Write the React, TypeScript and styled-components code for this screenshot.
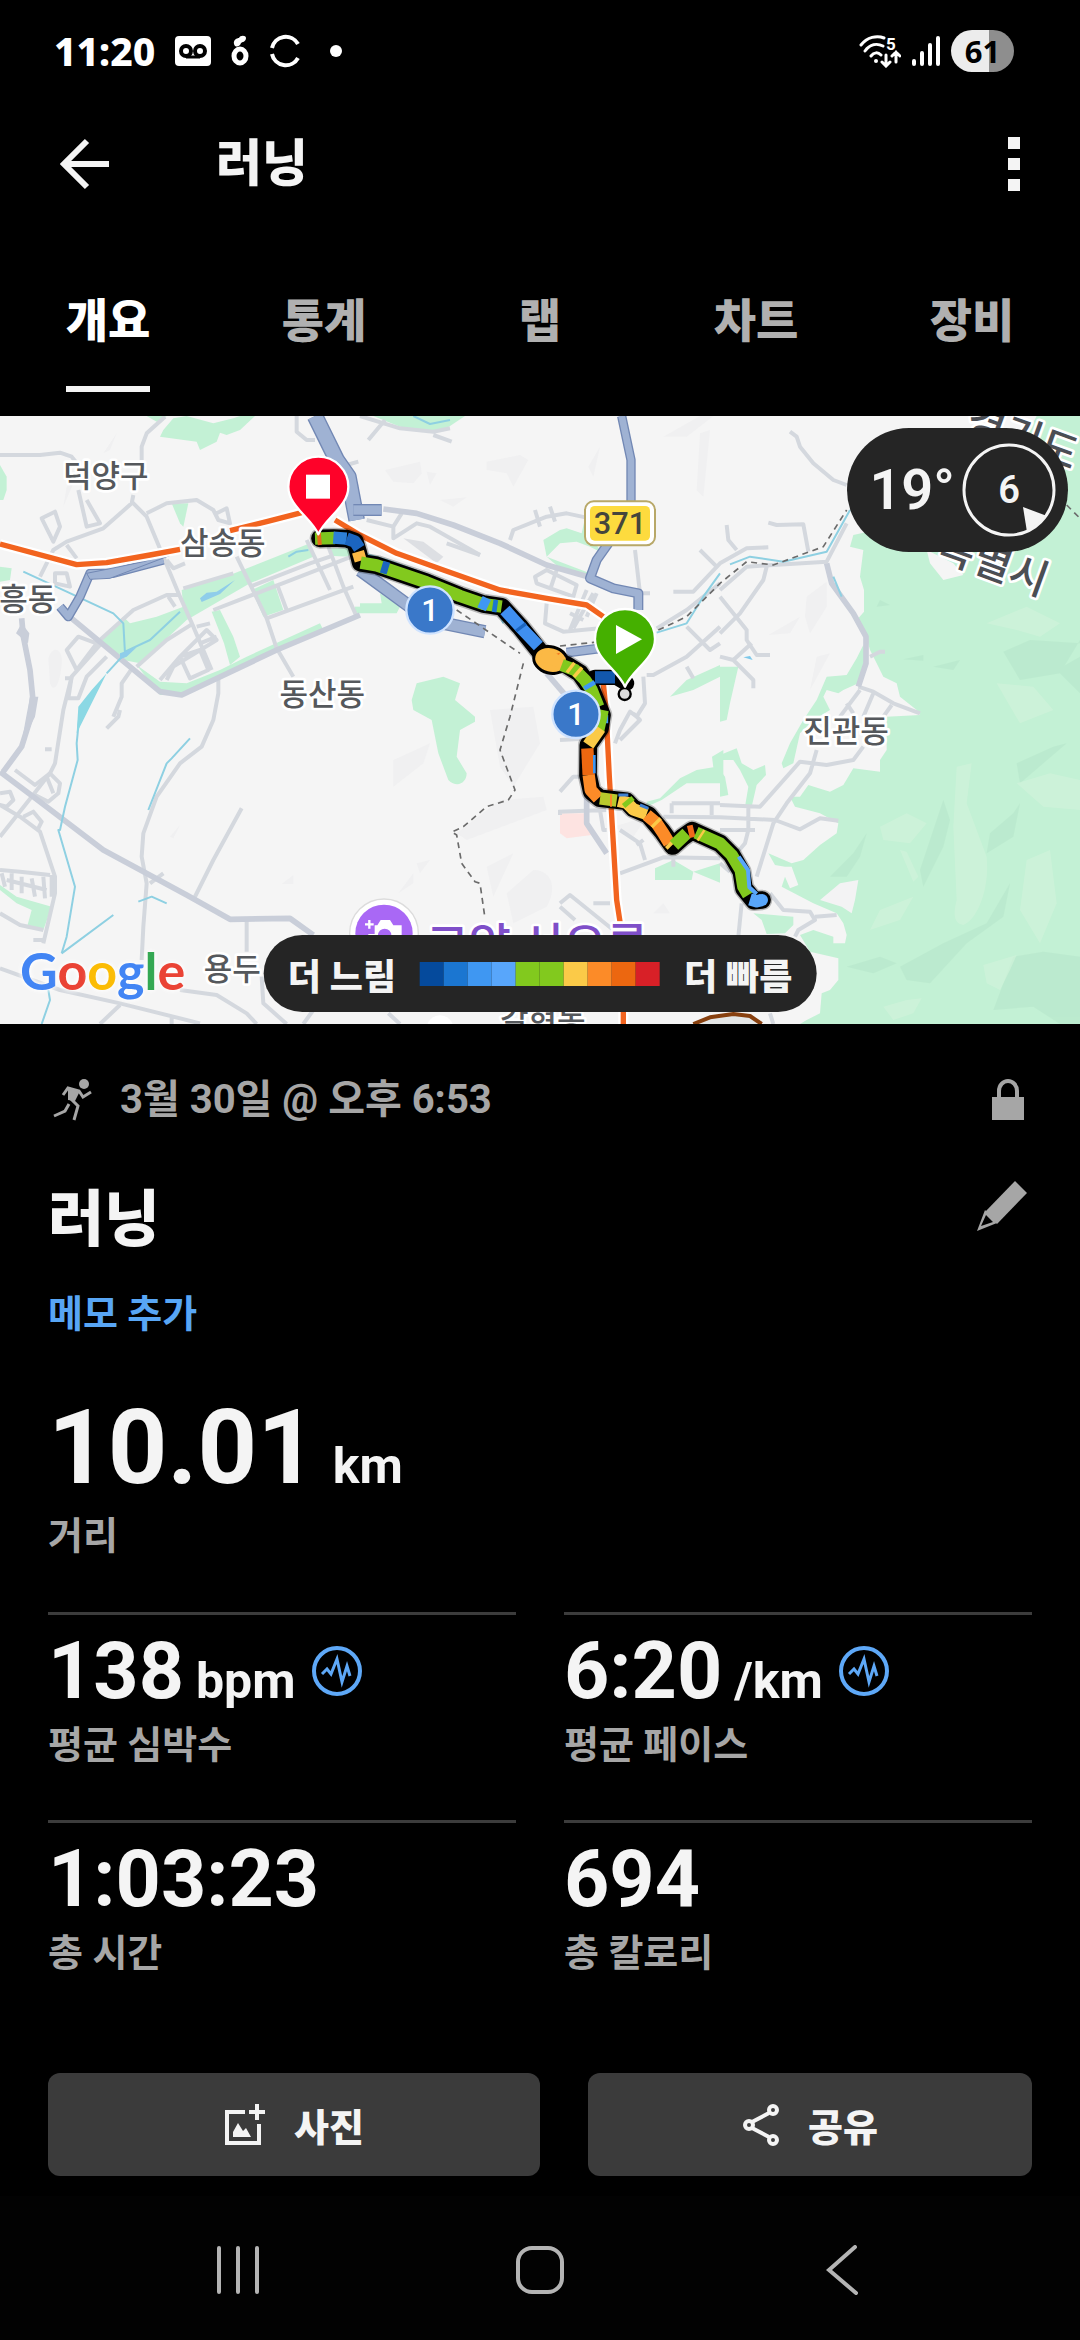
import { useState } from "react";
import styled, { createGlobalStyle } from "styled-components";

const GlobalStyle = createGlobalStyle`
  * {
    box-sizing: border-box;
  }
  body {
    margin: 0;
    background: #000000;
    color: #f4f4f4;
    font-family: Roboto, "Noto Sans CJK KR", sans-serif;
  }
  button {
    border: 0;
    padding: 0;
    background: none;
    color: inherit;
    font-family: inherit;
    cursor: pointer;
  }
  svg {
    display: block;
  }
`;

const Wrapper = styled.div`
  display: flex;
  flex-direction: column;
  min-height: 100vh;
`;

const StatusBar = styled.div`
  display: flex;
  align-items: center;
  justify-content: space-between;
  height: 102px;
  padding: 0 66px 0 54px;
`;

const StatusGroup = styled.div<{ $gap: number }>`
  display: flex;
  align-items: center;
  gap: ${(props) => props.$gap}px;
`;

const Clock = styled.span`
  font-family: "Noto Sans", sans-serif;
  font-size: 39px;
  font-weight: 800;
  line-height: 48px;
  color: #ffffff;
`;

const Battery = styled.span`
  width: 63px;
  height: 42px;
  border-radius: 21px;
  background: linear-gradient(to right, #ececec 61%, #8e8e8e 61%);
  color: #000000;
  font-family: "Noto Sans", sans-serif;
  font-size: 31px;
  font-weight: 700;
  line-height: 42px;
  text-align: center;
`;

const Header = styled.header`
  display: flex;
  align-items: center;
  height: 124px;
  padding: 0 60px;
`;

const HeaderTitle = styled.h1`
  flex: 1;
  margin: 0 0 0 105px;
  font-size: 50px;
  font-weight: 900;
  line-height: 72px;
`;

const TabList = styled.nav`
  display: grid;
  grid-template-columns: repeat(5, 1fr);
  justify-items: center;
  height: 190px;
  padding-top: 58px;
`;

const Tab = styled.button<{ $active: boolean }>`
  height: 108px;
  padding-bottom: 28px;
  border-bottom: 6px solid ${(props) => (props.$active ? "#f4f4f4" : "transparent")};
  color: ${(props) => (props.$active ? "#ffffff" : "#b0b0b0")};
  font-size: 46px;
  font-weight: 900;
  line-height: 72px;
`;

const MapBox = styled.section`
  position: relative;
  overflow: hidden;
  background: #f5f5f5;
`;

const MapSvg = styled.svg`
  width: 100%;
  height: auto;
`;

const Weather = styled.div`
  position: absolute;
  top: 12px;
  right: 12px;
  display: flex;
  align-items: center;
  gap: 7px;
  height: 124px;
  padding: 0 12px 0 22px;
  border-radius: 62px;
  background: #252525;
  font-size: 56px;
  font-weight: 600;
`;

const Wind = styled.div`
  position: relative;
  width: 94px;
  height: 94px;
  font-size: 38px;
  line-height: 94px;
  text-align: center;
  svg {
    position: absolute;
    inset: 0;
  }
`;

const Legend = styled.div`
  position: absolute;
  bottom: 12px;
  left: 50%;
  transform: translateX(-50%);
  display: flex;
  align-items: center;
  gap: 24px;
  height: 77px;
  padding: 0 24px;
  border-radius: 39px;
  background: #252525;
  font-size: 36px;
  font-weight: 900;
  white-space: nowrap;
`;

const Scale = styled.div`
  display: flex;
`;

const Swatch = styled.span<{ $color: string }>`
  width: 24px;
  height: 24px;
  background: ${(props) => props.$color};
`;

const GoogleMark = styled.span`
  position: absolute;
  bottom: 22px;
  left: 20px;
  font-family: Lato, sans-serif;
  font-size: 52px;
  font-weight: 700;
  line-height: 64px;
  text-shadow: 0 0 4px #ffffff, 0 0 6px #ffffff;
`;

const Letter = styled.span<{ $color: string }>`
  color: ${(props) => props.$color};
`;

const Details = styled.main`
  padding: 48px 48px 0;
`;

const MetaRow = styled.div`
  display: flex;
  align-items: center;
  color: #a6a6a6;
  font-size: 40px;
  font-weight: 700;
  line-height: 56px;
  time {
    flex: 1;
    margin-left: 26px;
  }
`;

const TitleRow = styled.div`
  display: flex;
  align-items: flex-start;
  justify-content: space-between;
  margin-top: 52px;
`;

const Title = styled.h2`
  margin: 0;
  font-size: 61px;
  font-weight: 900;
  line-height: 80px;
`;

const MemoLink = styled.a`
  display: block;
  margin-top: 26px;
  color: #58a6f5;
  font-size: 38px;
  font-weight: 700;
  line-height: 56px;
  text-decoration: none;
`;

const Distance = styled.div`
  margin: 50px 0 48px;
`;

const Value = styled.div<{ $big?: boolean }>`
  display: flex;
  align-items: baseline;
  gap: ${(props) => (props.$big ? 16 : 12)}px;
  height: ${(props) => (props.$big ? 112 : 84)}px;
  font-size: ${(props) => (props.$big ? 104 : 79)}px;
  font-weight: 700;
  line-height: ${(props) => (props.$big ? 112 : 84)}px;
  svg {
    align-self: center;
    margin-left: 4px;
  }
`;

const Unit = styled.span`
  font-size: 50px;
  font-weight: 700;
  line-height: 56px;
`;

const Label = styled.div`
  margin-top: 4px;
  color: #a6a6a6;
  font-size: 38px;
  font-weight: 700;
  line-height: 56px;
`;

const Stats = styled.div`
  display: grid;
  grid-template-columns: 1fr 1fr;
  gap: 47px 48px;
`;

const Stat = styled.div`
  padding-top: 14px;
  border-top: 3px solid #3c3c3c;
`;

const Actions = styled.div`
  display: grid;
  grid-template-columns: 41fr 37fr;
  gap: 48px;
  margin-top: auto;
  padding: 24px 48px 20px;
`;

const ActionButton = styled.button`
  display: flex;
  align-items: center;
  justify-content: center;
  gap: 28px;
  height: 103px;
  border-radius: 12px;
  background: #3b3b3b;
  font-size: 38px;
  font-weight: 900;
`;

const SystemNav = styled.nav`
  display: grid;
  grid-template-columns: repeat(3, 1fr);
  align-items: center;
  justify-items: center;
  height: 144px;
  padding: 4px 87px 0;
  background: #020202;
`;

const tabs = ["개요", "통계", "랩", "차트", "장비"];

const paceColors = [
  "#054a9c",
  "#1b76d1",
  "#3f97f2",
  "#58a6fb",
  "#82c91e",
  "#82c91e",
  "#fbca48",
  "#fc8b28",
  "#ec6710",
  "#d82027",
];

const googleLetters = [
  { char: "G", color: "#4285f4" },
  { char: "o", color: "#ea4335" },
  { char: "o", color: "#fbbc05" },
  { char: "g", color: "#4285f4" },
  { char: "l", color: "#34a853" },
  { char: "e", color: "#ea4335" },
];

const stats = [
  { value: "138", unit: "bpm", label: "평균 심박수", chart: true },
  { value: "6:20", unit: "/km", label: "평균 페이스", chart: true },
  { value: "1:03:23", label: "총 시간" },
  { value: "694", label: "총 칼로리" },
];

// map units are a third of a css pixel
const parks = [
  "M3240 18H3110L3040 150 2900 300 2560 375 2550 410 2590 420 2580 500 2592 540V605L2575 625 2595 665 2610 720 2630 760 2650 800 2690 820 2700 860 2750 900 2760 915 2660 920V1020L2640 1050V1085L2560 1075 2530 1125 2490 1145 2425 1125 2400 1160H2370L2385 1190 2460 1210 2515 1240 2510 1270 2460 1305 2410 1350 2375 1360 2305 1330 2325 1365 2355 1370H2375L2395 1425 2370 1435 2355 1400 2345 1430 2440 1480 2510 1510 2530 1540 2540 1575 2535 1600H2500V1580L2440 1560 2400 1575 2430 1625 2515 1645V1710L2490 1740 2465 1750 2460 1810 2420 1830 2400 1842H3240Z",
  "M2260 1510 2380 1520V1545L2355 1570 2300 1572 2285 1530Z",
  "M2590 705 2600 760 2575 820 2530 840 2515 850 2480 840 2470 860 2490 900 2440 930 2400 970 2380 1060 2350 1075 2345 1060 2370 1000 2410 930 2450 870 2480 800 2540 795 2570 745Z",
  "M2160 770H2215L2190 880 2180 930 2160 935Z",
  "M2160 1035 2210 1015 2225 1060 2260 1080 2295 1065 2298 1095 2270 1125 2255 1190H2235L2245 1130 2220 1080 2200 1050H2160Z",
  "M2160 1080 2175 1100 2185 1155 2160 1160Z",
  "M1120 18 1200 50 1290 68 1340 55 1395 18Z",
  "M1630 390 1680 360 1700 355 1745 370 1755 325 1800 425 1770 410 1730 395 1680 400 1640 440Z",
  "M1640 440 1770 490 1760 500 1680 475Z",
  "M1080 580H1145L1140 550 1200 590 1190 610H1080Z",
  "M1235 870 1250 820 1330 800 1380 820 1365 870 1425 920 1425 935 1380 960 1370 1040 1400 1090C1400 1120 1370 1135 1345 1110L1315 1030 1295 930 1240 900Z",
  "M2010 860 2060 810 2160 765V800L2080 840Z",
  "M1940 1175 1980 1165 2040 1105 2090 1080 2140 1072 2136 1040 2170 1020V1120H2060L1985 1170 1940 1190Z",
  "M1965 1375 2020 1350 2080 1385 2160 1360V1418L2080 1385 2075 1410H1965Z",
  "M490 60 520 25 560 18 640 40 700 25 720 18H765L720 60 680 75 660 68 650 95 600 120 590 95 480 80Z",
  "M515 280H565L550 350 540 340Z",
  "M0 165 20 200V240L10 270H0Z",
  "M0 470 35 475 30 510 0 515Z",
  "M300 690 370 620 390 640 470 620 550 590 545 540 690 495 930 400 940 440 750 520 560 630 420 760 370 750Z",
  "M410 765 480 815 560 820 660 780 740 740 960 640 970 660 820 730 540 855H480Z",
  "M755 540 820 510 850 600 790 620Z",
  "M635 605 660 600 700 680 720 740 690 765 672 700Z",
  "M1065 590H1080V610H1065Z",
  "M990 415H1050V440L1000 438Z",
  "M0 1425 50 1460 155 1490 130 1560 80 1555 95 1500 50 1480 0 1440Z",
  "M440 18H500L470 35Z",
];

const parkShades = [
  "M3010 725 3090 690 3240 700V690L3180 790 3060 810Z",
  "M3170 780 3240 740V850Z",
  "M3050 1060 3160 1010 3200 1000 3130 1060 3060 1120Z",
  "M2790 1290 2830 1170 2850 1230 2830 1310 2770 1430 2760 1380Z",
  "M2970 1270 3040 1210 3060 1180 3040 1280 2960 1330Z",
  "M2560 1330 2600 1270 2580 1340 2540 1400 2490 1400Z",
  "M2700 1670 2830 1600 2960 1540 3030 1420 3010 1520 2900 1600 2790 1720 2720 1710Z",
  "M3040 1640 3130 1625 3240 1640V1842H3180L3100 1790 2980 1800Z",
  "M2540 1670 2640 1640 2690 1660 2620 1690Z",
  "M2710 748 2770 735V752Z",
  "M2800 770 2880 750 2860 780Z",
  "M2640 570 2670 585 2630 590Z",
];

const parkLights = [
  "M2870 1070 2915 1060 2900 1180 2960 1340C2970 1440 2930 1530 2890 1545 2860 1540 2860 1510 2870 1470L2860 1250Z",
  "M2700 1320 2720 1325 2755 1400 2740 1415Z",
  "M2640 1250 2720 1210 2780 1240 2730 1300 2650 1290Z",
  "M3030 1680 3000 1740 2960 1720 2950 1665 3050 1635Z",
  "M2650 1790 2720 1770 2765 1765 2740 1810 2680 1830Z",
  "M2960 640 3080 590 3180 640 3120 680 3050 660Z",
  "M2640 1500 2740 1460 2700 1530 2610 1560Z",
  "M3080 1350 3150 1320 3170 1480 3120 1600 3060 1500Z",
  "M2990 820 3100 830 3160 900 3060 940Z",
  "M3050 1120 3150 1090 3240 1110V1200L3130 1190Z",
];

const hills = [
  "M1155 180 1260 155 1265 190 1240 220 1180 215Z",
  "M1460 155 1560 135 1585 150 1540 230 1520 190 1460 180Z",
  "M1280 185 1310 190 1290 225Z",
  "M1320 270 1400 262 1360 290Z",
  "M1765 170 1800 110 1780 200Z",
  "M1990 80 2100 18H2140L2060 80Z",
  "M2100 70 2130 60 2110 260 2090 240Z",
  "M2420 560 2480 515V590L2430 670 2415 620Z",
  "M2305 675 2400 620 2370 670Z",
  "M2450 740 2490 730 2430 840Z",
  "M145 745C160 700 190 720 185 760 180 830 160 850 150 820Z",
  "M1180 1050 1290 1000 1270 1060 1180 1130Z",
  "M1470 900 1600 890 1620 1000 1540 1130 1500 1070Z",
  "M1370 1270 1500 1170 1630 1160 1640 1200 1400 1290Z",
  "M1520 1450 1600 1380C1660 1380 1670 1440 1640 1490L1540 1540Z",
  "M1460 1370 1540 1330 1480 1460Z",
  "M1195 1450 1240 1390V1420Z",
  "M1250 1360 1290 1350 1260 1390Z",
  "M1840 1250 1940 1220 1900 1280Z",
  "M1960 1510 1990 1480 2010 1510Z",
  "M510 1280 540 1245 520 1285Z",
  "M845 1422 880 1395V1422Z",
  "M200 230 220 220 190 290Z",
  "M310 130 350 70 330 120Z",
];

const thinRoads = [
  "M0 135H120L180 128 215 140 235 165M495 20 440 70 425 110V150",
  "M235 240 260 350 300 340 260 270M400 255 395 280 310 355 200 395 160 420 120 500",
  "M395 275 440 320 540 560 580 650 635 780M440 310 500 280 590 270 640 300 655 330 690 340 680 295 650 310",
  "M125 325 165 305 180 350 160 395ZM200 405 230 445M165 490 200 490 210 530 165 520Z",
  "M500 450 520 475 555 460M710 440 800 625 830 715 880 800M550 535 700 490M300 690 400 600 500 555H540M505 560 525 590",
  "M580 640 500 690 410 770M750 530 930 460 990 440M640 600 1080 430M830 520 860 600M800 625 1060 530M920 390 990 540M985 410 1030 530 1070 620",
  "M200 720 235 680 290 700 230 780ZM320 740 260 800 235 865 205 865 215 800 300 705M195 805H210",
  "M480 810 540 740 620 660 650 690 520 770 500 810M540 740 600 720 625 780 570 805ZM590 650 630 640M600 700 650 680",
  "M215 800 190 900 165 1060 150 1090 95 1160 0 1280M400 770 365 820V860L340 920 M655 800V850L640 930 605 1010 540 1060 470 1160 430 1270 425 1340 440 1420 430 1550 425 1650",
  "M45 1080 105 1125 150 1090 180 1120 175 1150 145 1175 105 1155M140 1100 160 1150M0 1150 30 1145 40 1170 20 1190 0 1185 60 1220 120 1265 165 1400V1450L130 1600M70 1220 100 1205 125 1235 115 1255",
  "M0 1380 60 1385 150 1395M5 1390 15 1430M35 1390V1440M65 1400V1450M95 1405 105 1460M130 1400 135 1465M155 1395V1460M20 1410 140 1440M0 1510 60 1545 130 1560M100 1590H135",
  "M725 1195 640 1350 580 1470M490 1390 450 1420M135 1018H155M360 900 355 920 320 955",
  "M0 1675 180 1740 360 1780 600 1840M360 1785 300 1842M515 1820V1842M540 1740 650 1755 740 1810 770 1842M740 1530V1625M785 1700 790 1780 860 1842M940 1800 910 1842",
  "M890 18V65L920 90 945 90M1040 165 1075 155M1055 230H1075",
  "M1155 30 1105 90M1080 18 1200 55 1300 65 1350 55M1300 75 1355 95M1100 330 1180 350 1205 310M1180 350V385L1250 340 1290 350 1440 435",
  "M1400 360V365M1440 435 1340 400M1530 390 1540 360 1640 320 1700 310 1770 325M1605 300 1620 350M1650 290 1665 335",
  "M1605 500 1640 480 1730 525 1720 560 1610 520ZM1670 480 1650 540M1780 550 1720 655M1760 540 1710 660M1640 580 1635 640 1690 665 1800 655M1710 610 1750 630M1790 550 1760 620",
  "M1905 420 1920 550M1920 550H1950M2100 420 2150 470M2160 520 2060 600 1970 655M2020 545H2080L2160 460 2240 415 2305 412M2180 345 2185 390 2210 420",
  "M2060 650 2130 720 2160 700M1940 795H1960L2060 740 2160 650M2060 770 2080 805M1930 800 1935 880 1910 920 1890 905 1860 960 1845 1000M1900 910 1920 930 1860 990",
  "M2370 65 2390 80 2400 110 2440 160 2500 210 2540 225M2305 338 2330 345 2410 343 2425 425M2160 560 2240 660V690L2270 735H2310M2160 740 2200 750 2255 700M2200 750 2260 810V835M2160 670 2220 610 2290 510 2300 470",
  "M2160 540 2240 470 2320 465 2480 455 2540 340M2610 740 2640 725H2655M2575 830 2620 845 2680 880 2760 910M2620 850 2590 920M2580 840 2520 920M2540 880 2560 910M2675 885 2650 920",
  "M1680 1145 1720 1100H1745M1680 990 1780 985M1675 1205 1820 1200M1680 1200V1215M1800 1200 1810 1260H1820M1860 1260 1920 1300 1935 1350M1910 1305 1930 1290M1860 1390 1990 1342 2160 1345M1780 1480H1830M2020 1345V1370",
  "M1680 1480 1710 1455 1840 1560M1680 1490 1725 1530M1165 1810 1200 1842",
  "M2015 1180V1210M2015 1180H2160M2135 1180V1215M1990 1220 2160 1222 2325 1230 2400 1258 2460 1225 2515 1232M2160 1185 2280 1190 2400 1055 2480 1065 2560 1050 2590 1010M2450 1020 2430 1090 2360 1180 2320 1240 2270 1400M2160 1260H2265M2245 1190V1260L2235 1300 2210 1330",
  "M2310 1450 2350 1500 2430 1505 2445 1530 2395 1560 2385 1580M2445 1520 2510 1515M2225 1480 2215 1580M2160 1360 2190 1385M2310 1810 2320 1842",
];

const mainRoads = [
  "M1150 297 1250 310 1360 345 1500 400 1640 465 1780 505",
  "M65 625 70 680 90 780 98 860 90 930 65 1010 10 1085",
  "M0 1085 100 1160 310 1320 560 1455 690 1528 870 1525 940 1575",
  "M215 625 480 845 545 855 830 720 1080 615",
  "M2480 460 2495 520 2560 610 2598 680V760L2575 830",
  "M1760 1140V1240L1820 1330",
  "M1640 790 1700 860",
];

const highways = [
  { d: "M945 18 1010 150 1045 200 1070 330", width: 44 },
  { d: "M1060 300H1145", width: 30 },
  { d: "M1865 18 1893 150V300", width: 22 },
  { d: "M1825 400 1790 450 1770 505 1840 535 1915 550V600", width: 24 },
  { d: "M1080 480 1230 590 1330 640 1455 665", width: 34 },
  { d: "M1700 728 1800 715", width: 24 },
  { d: "M490 450 340 490 270 490 240 560 205 620 180 590", width: 22 },
];

const railways = ["M1370 600 1560 730", "M1680 708 1800 695", "M1975 660 2060 620 2160 520 2240 455 2320 465 2470 410 2540 300", "M3200 285 3240 325"];

const borders = ["M1570 760 1530 920 1500 1020 1545 1140 1525 1170 1460 1190 1390 1250 1355 1266 1370 1275 1385 1360 1425 1415 1440 1420 1455 1525"];

const streams = [
  "M70 485 200 545 340 610 370 640 375 730 320 790",
  "M375 725 450 690 540 605",
  "M865 440 890 425 925 420",
  "M240 900 230 1000 233 1050 195 1190 180 1260 175 1260 225 1430 200 1580 185 1630",
  "M185 1630 340 1515M570 985 515 1045 500 1060 445 1200M415 1475 455 1460 500 1480",
  "M145 1740 150 1770 125 1842",
  "M1090 430 1160 450 1300 500 1380 545 1430 550 1490 595 1510 640",
  "M1970 668 2060 640 2110 560 2160 490M2190 463 2250 440 2350 455 2480 425 2550 300M2500 500 2525 560",
  "M1240 18 1290 42 1350 30",
];

const railRed = [
  "M0 402 230 464 320 458 450 435 540 418",
  "M690 362 800 335 905 308M1005 330 1080 375 1190 430 1330 480 1500 540 1640 565 1760 585 1810 620",
  "M1810 820 1818 900 1828 1100 1840 1300 1850 1470 1870 1600 1870 1842",
];

const routeSpans = [
  { color: "#7cc41f", d: "M945 386 1005 384" },
  { color: "#e56a1b", d: "M952 387 964 386" },
  { color: "#2d7fd8", d: "M1000 383 1040 386" },
  { color: "#1b65c0", d: "M1040 386 1065 395 1078 415" },
  { color: "#fbb945", d: "M1074 425 1082 452" },
  { color: "#82c91e", d: "M1082 458 1130 466 1280 517 1380 558 1450 582 1505 590" },
  { color: "#1b65c0", d: "M1145 470 1165 476" },
  { color: "#3f97f2", d: "M1440 575 1465 587" },
  { color: "#1b76d1", d: "M1478 587 1492 589" },
  { color: "#3f8ff0", d: "M1515 600 1560 650 1615 708" },
  { color: "#1b65c0", d: "M1560 648 1566 656" },
  { color: "#fbb945", d: "M1625 735 1655 745 1690 760" },
  { color: "#82c91e", d: "M1685 765 1725 780 1755 810 1775 840 1795 890" },
  { color: "#fbca48", d: "M1708 770 1716 776M1730 783 1738 790" },
  { color: "#3f97f2", d: "M1765 820 1772 832M1806 915 1806 940" },
  { color: "#1257ad", d: "M1785 802 1845 802" },
  { color: "#82c91e", d: "M1808 900 1795 960" },
  { color: "#fbca48", d: "M1800 955 1765 1005" },
  { color: "#ec6710", d: "M1762 1015 1766 1095" },
  { color: "#fc8b28", d: "M1766 1095 1772 1140 1795 1165" },
  { color: "#b9c92c", d: "M1800 1165 1850 1172" },
  { color: "#fc8b28", d: "M1830 1172 1836 1172" },
  { color: "#fbca48", d: "M1855 1172 1880 1178 1900 1198 1940 1212" },
  { color: "#82c91e", d: "M1880 1170 1890 1182" },
  { color: "#fc8b28", d: "M1940 1215 1970 1240 1990 1270 2008 1300" },
  { color: "#fbca48", d: "M1965 1235 1972 1242M2008 1298 2016 1306" },
  { color: "#82c91e", d: "M2022 1306 2060 1270" },
  { color: "#f26a1b", d: "M2065 1266 2082 1262" },
  { color: "#82c91e", d: "M2088 1268 2160 1300 2195 1335 2222 1380 2230 1430 2245 1455" },
  { color: "#fbca48", d: "M2100 1274 2106 1278" },
  { color: "#58a6fb", d: "M2250 1468 2270 1474 2286 1470" },
];

const routeLine =
  "M960 385 1000 384 1040 386 1065 395 1074 425 1082 458 1130 466 1280 517 1380 558 1450 582 1505 590 1560 650 1620 725 1655 745 1700 765 1740 790 1775 840 1806 915 1800 955 1765 1005 1764 1095 1775 1145 1800 1165 1880 1174 1900 1195 1945 1215 1985 1262 2018 1308 2050 1280 2076 1262 2160 1300 2195 1335 2224 1385 2232 1435 2262 1472 2286 1470";

const places = [
  { name: "덕양구", x: 317, y: 232 },
  { name: "삼송동", x: 668, y: 432 },
  { name: "흥동", x: 83, y: 600 },
  { name: "동산동", x: 967, y: 886 },
  { name: "진관동", x: 2538, y: 996 },
  { name: "용두", x: 697, y: 1710 },
  { name: "갈현동", x: 1628, y: 1862 },
];

const PlaceText = styled.text<{ $color?: string; $size?: number; $anchor?: string }>`
  fill: ${(props) => props.$color || "#55585c"};
  stroke: #ffffff;
  stroke-width: 16px;
  stroke-linejoin: round;
  paint-order: stroke;
  font-family: "Noto Sans CJK KR", sans-serif;
  font-size: ${(props) => props.$size || 93}px;
  font-weight: 500;
  text-anchor: ${(props) => props.$anchor || "middle"};
`;

const ShieldText = styled.text<{ $color: string }>`
  fill: ${(props) => props.$color};
  font-size: 92px;
  font-weight: 500;
  text-anchor: middle;
`;

function Pin({ x, y, color }: { x: number; y: number; color: string }) {
  return (
    <path
      transform={`translate(${x} ${y})`}
      d="M0 143C-22 92-90 60-90 0A90 90 0 0 1 90 0C90 60 22 92 0 143Z"
      fill={color}
      stroke="#fff"
      strokeWidth="7"
    />
  );
}

function Map() {
  return (
    <MapSvg viewBox="0 18 3240 1824" fill="none" strokeLinejoin="round" strokeLinecap="butt" role="img" aria-label="지도">
      <g fill="#f0f0f1">
        {hills.map((d) => (
          <path key={d} d={d} />
        ))}
      </g>
      <path d="M1680 1210H1755L1775 1275 1700 1285 1680 1270Z" fill="#fde3e1" />
      <g fill="#c3f1d5">
        {parks.map((d) => (
          <path key={d} d={d} />
        ))}
      </g>
      <g fill="#b5e5ca" opacity="0.5">
        {parkShades.map((d) => (
          <path key={d} d={d} />
        ))}
      </g>
      <g fill="#d3f4dc" opacity="0.6">
        {parkLights.map((d) => (
          <path key={d} d={d} />
        ))}
      </g>
      <path d="M2460 1470 2520 1420 2575 1410 2565 1470 2555 1510 2525 1490Z" fill="#f3f3f4" />
      <path d="M2780 420 2860 460 2890 495 2830 510 2790 460Z" fill="#f5f5f5" />
      <g stroke="#d4d8de" strokeWidth="12">
        {thinRoads.map((d) => (
          <path key={d} d={d} />
        ))}
      </g>
      <g stroke="#c9ced9" strokeWidth="17">
        {mainRoads.map((d) => (
          <path key={d} d={d} />
        ))}
      </g>
      <path d="M48 670 65 640 88 670 84 700Z M90 860 115 860 105 920 65 1000 75 940Z" fill="#c9ced9" />
      <path d="M1210 385 1270 395 1330 440 1310 460Z" fill="#dddfe3" />
      <g stroke="#8ed0e2" strokeWidth="6">
        {streams.map((d) => (
          <path key={d} d={d} />
        ))}
      </g>
      <path d="M320 790 290 850 250 930 230 970 235 890 275 840Z" fill="#8bd8e4" />
      <path d="M600 565 620 548 650 545 705 510 660 552 605 576Z" fill="#8fcdea" />
      <path d="M360 730 410 712 380 740 360 748Z" fill="#8fcdea" />
      <path d="M2230 742 2250 738 2258 750Z" fill="#7dc8ea" />
      {highways.map((road) => (
        <g key={road.d}>
          <path d={road.d} stroke="#7288b4" strokeWidth={road.width + 6} />
          <path d={road.d} stroke="#9fb2d3" strokeWidth={road.width - 2} />
        </g>
      ))}
      <path d="M260 490 330 476 430 455 540 425 330 505 270 508Z" fill="#9fb2d3" stroke="#7288b4" strokeWidth="3" />
      <g stroke="#6b6b6b" strokeWidth="5" strokeDasharray="18 14">
        {railways.map((d) => (
          <path key={d} d={d} />
        ))}
        {borders.map((d) => (
          <path key={d} d={d} />
        ))}
      </g>
      {railRed.map((d) => (
        <g key={d}>
          <path d={d} stroke="#fff" strokeWidth="30" />
          <path d={d} stroke="#f2641f" strokeWidth="16" />
        </g>
      ))}
      <path d="M2080 1842 2130 1822 2200 1812 2250 1818 2285 1842" stroke="#87400f" strokeWidth="12" fill="#e4e6e6" />

      <path d={routeLine} stroke="#000" opacity="0.25" strokeWidth="62" strokeLinecap="round" />
      <path d="M1765 812 1785 802 1850 802 1880 820" stroke="#000" strokeWidth="46" strokeLinecap="round" />
      <path d={routeLine} stroke="#000" strokeWidth="53" strokeLinecap="round" />
      <g transform="rotate(14 1652 750)">
        <ellipse cx="1652" cy="750" rx="56" ry="44" fill="#000" />
        <ellipse cx="1652" cy="750" rx="47" ry="35" fill="#fbb945" />
      </g>
      <path d="M1640 740 1680 728 1670 748Z" fill="#f26a1b" />
      {routeSpans.map((span) => (
        <path key={span.d} d={span.d} stroke={span.color} strokeWidth="37" />
      ))}
      <path d="M2216 1340 2244 1380 2248 1432 2270 1452" stroke="#58a6fb" strokeWidth="12" />
      <circle cx="2286" cy="1470" r="18" fill="#58a6fb" />
      <path d="M1783 1035 1783 1090" stroke="#3f97f2" strokeWidth="8" />
      <path d="M1855 1155H1885M1920 1185 1945 1195" stroke="#3f7fd0" strokeWidth="9" />

      <g>
        <rect x="1755" y="274" width="210" height="132" rx="26" fill="#fff" stroke="#b8a868" strokeWidth="6" />
        <rect x="1770" y="288" width="180" height="104" rx="14" fill="#fddb3e" />
        <ShieldText x={1860} y={371} $color="#45453c">
          371
        </ShieldText>
      </g>
      {[
        { x: 1290, y: 600 },
        { x: 1728, y: 913 },
      ].map((shield) => (
        <g key={shield.x}>
          <circle cx={shield.x} cy={shield.y} r="71" fill="#3a78c9" stroke="#cfe3ff" strokeWidth="7" />
          <ShieldText x={shield.x} y={shield.y + 32} $color="#ffffff">
            1
          </ShieldText>
        </g>
      ))}

      {places.map((place) => (
        <PlaceText key={place.name} x={place.x} y={place.y}>
          {place.name}
        </PlaceText>
      ))}
      <PlaceText $color="#4b4e54" $size={125} $anchor="end" transform="translate(3215 180) rotate(20)">
        경기도
      </PlaceText>
      <PlaceText $color="#4b4e54" $size={125} $anchor="end" transform="translate(3125 558) rotate(20)">
        특별시
      </PlaceText>
      <PlaceText $color="#7f4fc9" $size={138} x={1612} y={1654}>
        고양 서오릉
      </PlaceText>

      <circle cx="1152" cy="1570" r="103" fill="#fff" stroke="#dcdcdc" strokeWidth="4" />
      <circle cx="1152" cy="1570" r="86" fill="#a968f5" />
      <path
        d="M1124 1546H1132L1142 1530H1170L1180 1546H1205V1610H1105V1572H1124Z"
        fill="#fff"
      />
      <circle cx="1154" cy="1576" r="20" fill="#a968f5" />
      <path d="M1108 1530V1556M1095 1543H1121" stroke="#fff" strokeWidth="7" />
      <circle cx="1320" cy="1856" r="40" fill="#fff" />

      <circle cx="1874" cy="852" r="18" fill="#ddd" stroke="#000" strokeWidth="7" />
      <Pin x={955} y={230} color="#fe0229" />
      <rect x="918" y="194" width="72" height="72" fill="#fff" />
      <Pin x={1875} y={687} color="#45b000" />
      <path d="M1848 645V732L1926 688Z" fill="#fff" />
    </MapSvg>
  );
}

function ChartBadge() {
  return (
    <svg width="50" height="50" viewBox="0 0 50 50" fill="none" stroke="#5ea8f7" aria-hidden="true">
      <circle cx="25" cy="25" r="23" strokeWidth="4" />
      <path d="M10 28 15 23 19 28 25 13 30 36 35 20 38 30" strokeWidth="3" />
    </svg>
  );
}

function App() {
  const [activeTab, setActiveTab] = useState(tabs[0]);

  return (
    <Wrapper>
      <GlobalStyle />
      <StatusBar>
        <StatusGroup $gap={20}>
          <Clock>11:20</Clock>
          <svg width="36" height="30" viewBox="0 0 36 30" fill="none" aria-hidden="true">
            <rect width="36" height="30" rx="4" fill="#fff" />
            <g stroke="#000" strokeWidth="4">
              <circle cx="11" cy="15" r="5" />
              <circle cx="25" cy="15" r="5" />
              <path d="M11 21H25" strokeWidth="3" />
            </g>
          </svg>
          <svg width="18" height="32" viewBox="0 0 18 32" fill="none" aria-hidden="true">
            <ellipse cx="9" cy="21" rx="6" ry="7" stroke="#fff" strokeWidth="5" />
            <path d="M3 9C2 5 6 3 8 3 9 0 15 0 15 3 15 7 11 7 10 8 9 12 4 13 3 9Z" fill="#fff" />
          </svg>
          <svg width="34" height="34" viewBox="0 0 34 34" fill="none" stroke="#fff" strokeWidth="4" aria-hidden="true">
            <path d="M3 14A14 14 0 0 1 29 10M3 20A14 14 0 0 0 29 24" />
          </svg>
          <svg width="30" height="12" viewBox="0 0 30 12" aria-hidden="true">
            <circle cx="13" cy="6" r="6" fill="#fff" />
          </svg>
        </StatusGroup>
        <StatusGroup $gap={11}>
          <svg width="42" height="34" viewBox="0 0 42 34" fill="none" stroke="#fff" aria-hidden="true">
            <g strokeWidth="3" strokeLinecap="round">
              <path d="M2 11C8 3 18 1 25 4M6 17C11 10 18 9 24 12M12 22C15 18 19 18 22 21" />
              <path d="M27 21V31M23 28 27 32 31 28M37 28V18M33 22 37 18 41 22" />
            </g>
            <circle cx="17" cy="27" r="2" fill="#fff" stroke="none" />
            <text x="27" y="16" fill="#fff" stroke="none" fontSize="17" fontWeight="700">
              5
            </text>
          </svg>
          <svg width="28" height="32" viewBox="0 0 28 32" stroke="#fff" strokeWidth="4" strokeLinecap="round" aria-hidden="true">
            <path d="M2 26V29M10 18V29M18 10V29M26 3V29" />
          </svg>
          <Battery>61</Battery>
        </StatusGroup>
      </StatusBar>

      <Header>
        <button aria-label="뒤로">
          <svg width="51" height="52" viewBox="0 0 51 52" fill="none" stroke="#f4f4f4" strokeWidth="6">
            <path d="M27 3 4 26 27 49M4 26H49" />
          </svg>
        </button>
        <HeaderTitle>러닝</HeaderTitle>
        <button aria-label="더보기">
          <svg width="12" height="54" viewBox="0 0 12 54" fill="#f4f4f4">
            <path d="M0 0H12V12H0ZM0 21H12V33H0ZM0 42H12V54H0Z" />
          </svg>
        </button>
      </Header>

      <TabList>
        {tabs.map((tab) => (
          <Tab key={tab} $active={tab === activeTab} onClick={() => setActiveTab(tab)}>
            {tab}
          </Tab>
        ))}
      </TabList>

      <MapBox>
        <Map />
        <GoogleMark>
          {googleLetters.map((letter, index) => (
            <Letter key={index} $color={letter.color}>
              {letter.char}
            </Letter>
          ))}
        </GoogleMark>
        <Weather>
          <span>19°</span>
          <Wind>
            6
            <svg width="94" height="94" viewBox="0 0 94 94" fill="none" aria-hidden="true">
              <circle cx="47" cy="47" r="45" stroke="#f4f4f4" strokeWidth="3" />
              <path d="M61 64 85 73 65 89Z" fill="#f4f4f4" />
            </svg>
          </Wind>
        </Weather>
        <Legend>
          <span>더 느림</span>
          <Scale>
            {paceColors.map((color, index) => (
              <Swatch key={index} $color={color} />
            ))}
          </Scale>
          <span>더 빠름</span>
        </Legend>
      </MapBox>

      <Details>
        <MetaRow>
          <svg width="46" height="42" viewBox="0 0 46 42" fill="none" stroke="#a6a6a6" aria-hidden="true">
            <circle cx="36" cy="5" r="5" fill="#a6a6a6" stroke="none" />
            <path d="M20 8 32 12 27 22 20 21Z" fill="#a6a6a6" stroke="none" />
            <path d="M15 16 20 9 31 12 35 18 43 13" strokeWidth="3" />
            <path d="M23 20 30 27 26 41M21 25 17 32 6 37" strokeWidth="3" />
          </svg>
          <time>3월 30일 @ 오후 6:53</time>
          <svg width="48" height="42" viewBox="0 0 48 42" aria-label="비공개">
            <path d="M8 18H40V41H8Z" fill="#a6a6a6" />
            <path d="M15 20V12A9 10 0 0 1 33 12V20" fill="none" stroke="#a6a6a6" strokeWidth="4" />
          </svg>
        </MetaRow>
        <TitleRow>
          <Title>러닝</Title>
          <button aria-label="편집">
            <svg width="56" height="52" viewBox="0 0 56 52" fill="#a6a6a6">
              <path d="M39 1 51 13 21 44 9 32Z" />
              <path d="M9 30 21 43 1 51ZM10 35 5 46 17 42Z" fillRule="evenodd" />
            </svg>
          </button>
        </TitleRow>
        <MemoLink href="#memo">메모 추가</MemoLink>
        <Distance>
          <Value $big>
            <span>10.01</span>
            <Unit>km</Unit>
          </Value>
          <Label>거리</Label>
        </Distance>
        <Stats>
          {stats.map((stat) => (
            <Stat key={stat.label}>
              <Value>
                <span>{stat.value}</span>
                {stat.unit && <Unit>{stat.unit}</Unit>}
                {stat.chart && <ChartBadge />}
              </Value>
              <Label>{stat.label}</Label>
            </Stat>
          ))}
        </Stats>
      </Details>

      <Actions>
        <ActionButton>
          <svg width="42" height="44" viewBox="0 0 42 44" fill="none" stroke="#f4f4f4" aria-hidden="true">
            <path d="M21 9H3V40H35V21" strokeWidth="4" />
            <path d="M33 1V17M25 9H41" strokeWidth="4" />
            <path d="M9 34V29L14 20 19 28 22 25 27 34Z" fill="#f4f4f4" stroke="none" />
          </svg>
          사진
        </ActionButton>
        <ActionButton>
          <svg width="38" height="44" viewBox="0 0 38 44" fill="none" stroke="#f4f4f4" strokeWidth="4" aria-hidden="true">
            <circle cx="7" cy="22" r="4" />
            <circle cx="31" cy="7" r="4" />
            <circle cx="31" cy="37" r="4" />
            <path d="M10 19 27 10M10 25 27 34" />
          </svg>
          공유
        </ActionButton>
      </Actions>

      <SystemNav>
        <button aria-label="최근 앱">
          <svg width="44" height="48" viewBox="0 0 44 48" stroke="#b4b4b4" strokeWidth="4" strokeLinecap="round">
            <path d="M3 2V46M22 2V46M41 2V46" />
          </svg>
        </button>
        <button aria-label="홈">
          <svg width="50" height="50" viewBox="0 0 50 50" fill="none" stroke="#b4b4b4" strokeWidth="4">
            <rect x="3" y="3" width="44" height="44" rx="14" />
          </svg>
        </button>
        <button aria-label="이전">
          <svg width="32" height="50" viewBox="0 0 32 50" fill="none" stroke="#b4b4b4" strokeWidth="4" strokeLinecap="round">
            <path d="M29 2 3 25 30 48" />
          </svg>
        </button>
      </SystemNav>
    </Wrapper>
  );
}

export default App;
